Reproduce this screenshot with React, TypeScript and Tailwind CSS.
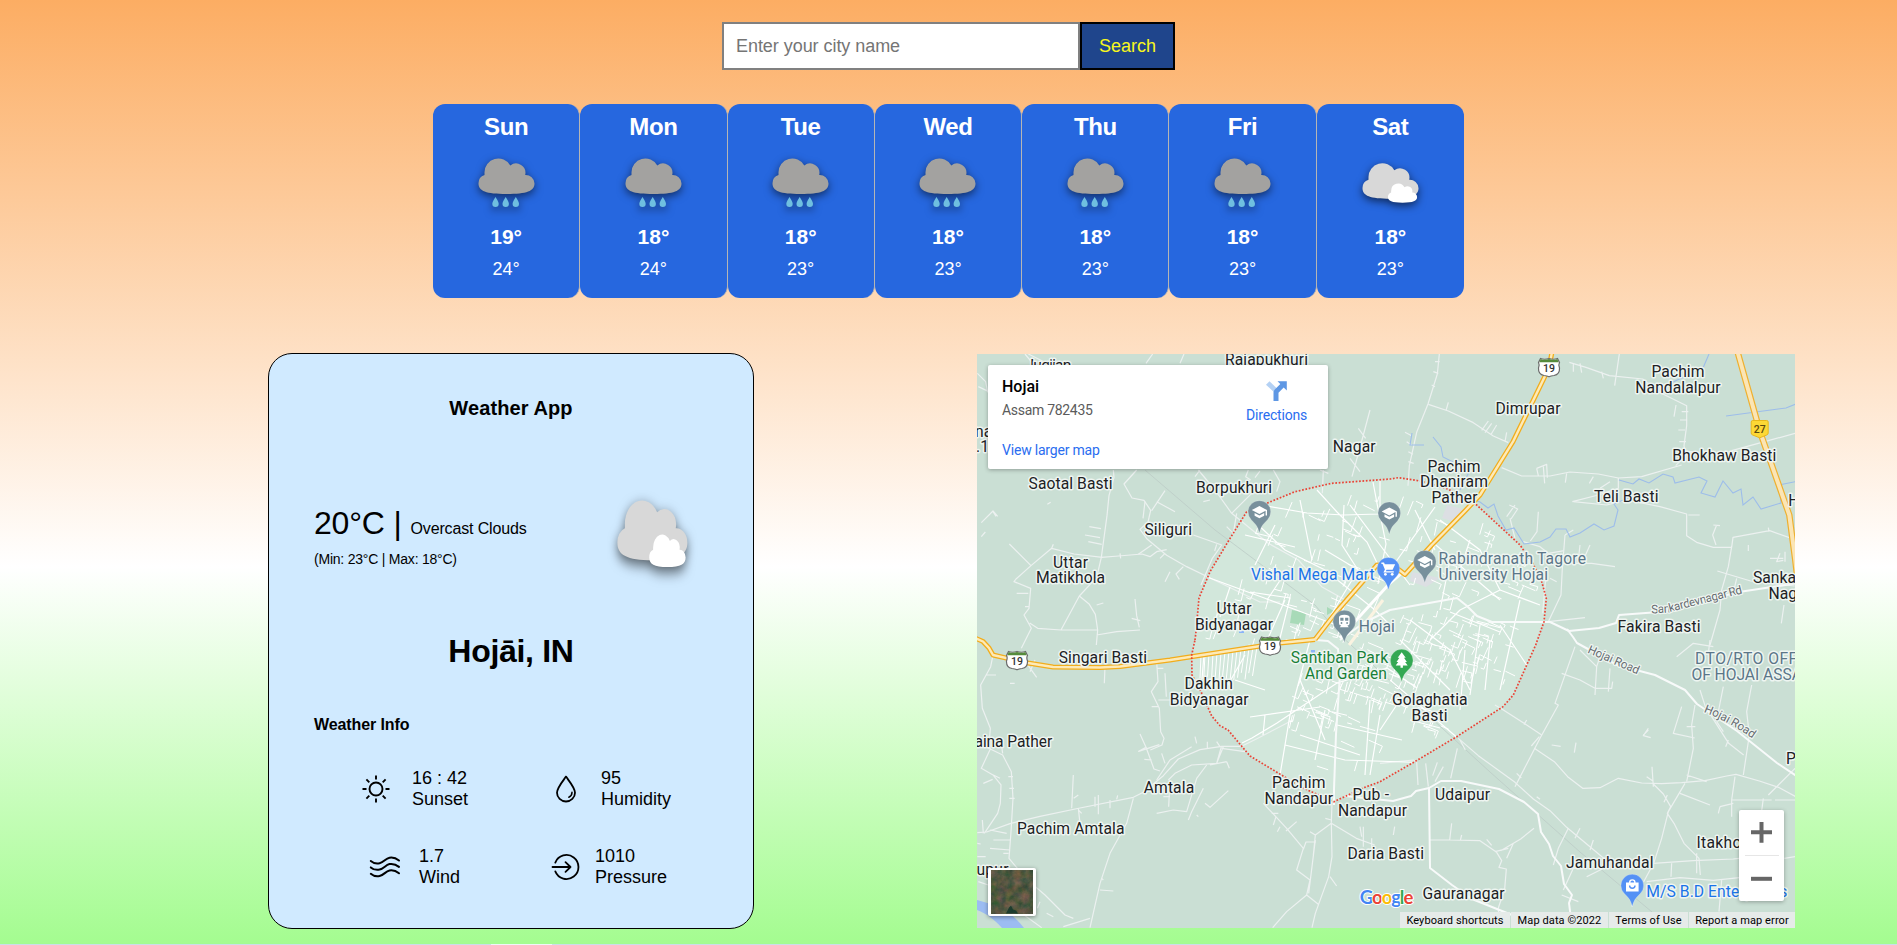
import React from "react";

const arial = "font-['Liberation_Sans',Arial,sans-serif]";
const roboto = "font-['Roboto',sans-serif]";

const CLOUD =
  "M17.5 25V22.5A13.8 13.8 0 0 1 43.3 15.5A9.4 9.4 0 0 1 58.2 25A8.8 8.8 0 0 1 67.5 33.5C67.5 41 60 44 39.5 44C19 44 11.5 41 11.5 33.5A8.8 8.8 0 0 1 17.5 25Z";

function RainIcon() {
  return (
    <svg viewBox="0 0 80 70" className="h-[70px] w-20 overflow-visible">
      <g className="drop-shadow-[0_3px_4px_rgba(0,0,0,0.55)]">
        <path d={CLOUD} fill="#a3a2a0" />
        {[28.5, 38.7, 48.8].map((x) => (
          <path key={x} d={`M${x} 47c1.300 2.600 3.200 4.600 3.200 6.700a3.200 3.200 0 0 1-6.400 0c0-2.100 1.900-4.100 3.200-6.700z`} fill="#6fbfe0" />
        ))}
      </g>
    </svg>
  );
}

function CloudsIcon({ className }: { className: string }) {
  return (
    <svg viewBox="0 0 80 70" preserveAspectRatio="none" className={`overflow-visible ${className}`}>
      <g className="drop-shadow-[0_3px_4px_rgba(0,0,0,0.6)]">
        <path d={CLOUD} transform="translate(0 4.800)" fill="#d8d8d8" />
        <path d={CLOUD} transform="translate(31 29) scale(.52 .54)" fill="#fff" />
      </g>
    </svg>
  );
}

const week = [
  { day: "Sun", min: 19, max: 24, rain: true },
  { day: "Mon", min: 18, max: 24, rain: true },
  { day: "Tue", min: 18, max: 23, rain: true },
  { day: "Wed", min: 18, max: 23, rain: true },
  { day: "Thu", min: 18, max: 23, rain: true },
  { day: "Fri", min: 18, max: 23, rain: true },
  { day: "Sat", min: 18, max: 23, rain: false },
];

function Forecast() {
  return (
    <div className="mx-auto mt-[34px] grid h-[194px] w-[1031px] grid-cols-7">
      {week.map((d, i) => (
        <div
          key={d.day}
          className={`flex flex-col items-center rounded-xl bg-[#2667df] text-white ${i < 6 ? "border-r border-[#b5b5b5]" : ""}`}
        >
          <div className="mt-[9px] h-[28px] text-[24px] leading-[28px] font-bold tracking-[-0.4px]">{d.day}</div>
          <div className="mt-[9px] h-[70px] pl-px">{d.rain ? <RainIcon /> : <CloudsIcon className="h-[70px] w-20" />}</div>
          <div className="mt-[5px] text-[21px] leading-[24px] font-bold">{d.min}°</div>
          <div className="mt-[10px] text-[18px] leading-[21px]">{d.max}°</div>
        </div>
      ))}
    </div>
  );
}

const iconProps = {
  fill: "none",
  stroke: "#000",
  strokeLinecap: "round" as const,
  strokeLinejoin: "round" as const,
};

function SunIcon() {
  return (
    <svg viewBox="0 0 30 30" className="size-[30px]" {...iconProps} strokeWidth="1.9" strokeLinecap="butt">
      <circle cx="15" cy="15" r="6.500" />
      <path d="M15 1.500v4M15 24.500v4M1.500 15h4M24.500 15h4M5.400 5.400l2.900 2.900M21.700 21.700l2.900 2.900M5.400 24.600l2.900-2.900M21.700 8.300l2.900-2.900" />
    </svg>
  );
}

function DropIcon() {
  return (
    <svg viewBox="0 0 30 30" className="size-[30px]" {...iconProps} strokeWidth="1.8">
      <path d="M15 2.600C12.500 6.300 6 13.600 6 18.800a9 8.700 0 0 0 18 0C24 13.600 17.500 6.300 15 2.600z" />
      <path d="M21 18.300c0 2.600-1.300 4.200-3.200 5" strokeWidth="1.500" />
    </svg>
  );
}

function WindIcon() {
  return (
    <svg viewBox="0 0 32 30" className="h-[30px] w-8" {...iconProps} strokeWidth="2">
      {[0, 6.4, 12.8].map((y) => (
        <path key={y} transform={`translate(0 ${y})`} d="M1.800 9c2.500 2.200 5.500 2.800 8.800 2.200C15 10.300 16.500 6.500 20.500 5.700c3.500-.6 6.800.6 9.500 2.800" />
      ))}
    </svg>
  );
}

function PressureIcon() {
  return (
    <svg viewBox="0 0 30 30" className="size-[30px]" {...iconProps} strokeWidth="1.800">
      <path d="M4.300 10.600a12 12 0 1 1 0 8.800" />
      <path d="M1.500 15h18M14.500 10.200l5 4.800-5 4.800" />
    </svg>
  );
}

function Stat({ icon, value, label, gap }: { icon: React.ReactNode; value: string; label: string; gap: string }) {
  return (
    <div className={`flex items-center ${gap}`}>
      {icon}
      <div className="text-[18px] leading-[21px]">
        <div>{value}</div>
        <div>{label}</div>
      </div>
    </div>
  );
}

function WeatherCard() {
  return (
    <section className="flex h-[576px] w-[486px] flex-col rounded-3xl border border-black bg-[#d0eaff] px-[45px] text-black">
      <h1 className="mt-[42px] text-center text-[20px] leading-6 font-bold tracking-[0.1px]">Weather App</h1>
      <div className="mt-[58px] flex h-[118px] justify-between">
        <div className="mt-[27px]">
          <div className="flex items-baseline leading-[37px]">
            <span className="text-[32px] tracking-[-0.2px]">20°C |</span>
            <span className="ml-[9px] text-[16px] tracking-[-0.15px]">Overcast Clouds</span>
          </div>
          <div className="mt-[4px] text-[14px] leading-4 tracking-[-0.22px]">(Min: 23°C | Max: 18°C)</div>
        </div>
        <CloudsIcon className="mr-[5px] h-[118px] w-[100px]" />
      </div>
      <h2 className="mt-[37px] text-center text-[32px] leading-[37px] font-bold tracking-[-0.3px]">Hojāi, IN</h2>
      <h3 className="mt-[46px] text-[16px] leading-[18px] font-bold tracking-[-0.1px]">Weather Info</h3>
      <div className="mt-[34px] grid grid-cols-[190px_1fr] gap-y-9 pl-[47px]">
        <Stat icon={<SunIcon />} value="16 : 42" label="Sunset" gap="gap-[21px]" />
        <Stat icon={<DropIcon />} value="95" label="Humidity" gap="gap-[20px]" />
        <div className="pl-2">
          <Stat icon={<WindIcon />} value="1.7" label="Wind" gap="gap-[18px]" />
        </div>
        <Stat icon={<PressureIcon />} value="1010" label="Pressure" gap="gap-[14px]" />
      </div>
    </section>
  );
}

type Label = [text: string, x: number, y: number, width: number, color?: string];
const SLATE = "#5b7688";
const BLUE = "#1a73e8";
const GREEN = "#188038";

const labels: Label[] = [
  ["Jugijan", 1025.5, 370.5, 46],
  ["Rajapukhuri", 1225, 365, 83],
  ["na", 975, 437, 0],
  [".1", 976, 452, 0],
  ["Nagar", 1332.7, 452, 43],
  ["Saotal Basti", 1028.6, 489.3, 84],
  ["Borpukhuri", 1196, 493.3, 76],
  ["Siliguri", 1144.5, 535, 47.5],
  ["Uttar", 1053, 567.6, 35],
  ["Matikhola", 1036, 583.4, 69],
  ["Vishal Mega Mart", 1251, 579.6, 123.6, BLUE],
  ["Uttar", 1216.5, 614.2, 35],
  ["Bidyanagar", 1195, 630, 78],
  ["Hojai", 1358.8, 632.3, 36, SLATE],
  ["Pachim", 1651.5, 377.3, 53],
  ["Nandalalpur", 1635.3, 393.2, 85.3],
  ["Dimrupar", 1495.5, 414, 65],
  ["Bhokhaw Basti", 1672.3, 461, 104],
  ["Pachim", 1427.5, 471.6, 53],
  ["Dhaniram", 1420, 487.3, 68],
  ["Pather", 1431.5, 503, 46],
  ["Teli Basti", 1594, 502.2, 64.5],
  ["H", 1788.3, 506.4, 0],
  ["Rabindranath Tagore", 1438.5, 564.4, 147.5, SLATE],
  ["University Hojai", 1438.5, 580.2, 109.5, SLATE],
  ["Sankar", 1753, 583, 0],
  ["Nagar", 1768.5, 599.2, 0],
  ["Fakira Basti", 1617.5, 632.2, 83],
  ["Singari Basti", 1058.7, 663, 88.5],
  ["Dakhin", 1184.5, 689.2, 48.5],
  ["Bidyanagar", 1169.7, 705.4, 79],
  ["aina Pather", 974.5, 746.5, 77.8],
  ["Amtala", 1143.7, 793.2, 50.5],
  ["Pachim", 1272, 788.2, 53.5],
  ["Nandapur", 1264.5, 804.2, 68.5],
  ["Pachim Amtala", 1017, 834.4, 107.5],
  ["upur", 976.5, 875, 32],
  ["Santiban Park", 1290.7, 663.3, 97.5, GREEN],
  ["And Garden", 1305, 679.2, 82, GREEN],
  ["Pub -", 1352.5, 800.4, 36.5],
  ["Nandapur", 1338, 816.4, 69],
  ["Daria Basti", 1347.5, 858.6, 76.5],
  ["Golaghatia", 1392, 704.9, 75.5],
  ["Basti", 1411.5, 720.6, 36],
  ["DTO/RTO OFFICE", 1695, 664.3, 127, SLATE],
  ["OF HOJAI ASSAM", 1691.5, 680.2, 124, SLATE],
  ["Udaipur", 1435, 799.6, 55],
  ["Gauranagar", 1422.6, 898.6, 82],
  ["Jamuhandal", 1566, 867.5, 87.5],
  ["Itakhola", 1696.4, 848.2, 58],
  ["P", 1786, 764.2, 0],
  ["M/S B.D Enterprises", 1646.3, 896.6, 141, BLUE],
];

const HALO = { stroke: "#eef5f1", strokeWidth: 3, strokeLinejoin: "round" as const, paintOrder: "stroke" as const };

const TOWN =
  "M1195 640L1196 631.700 1199 598 1210 571.700 1228 541.700 1246.700 511.700 1266.700 503.300 1295 491.700 1331.700 483.300 1390 479 1398.300 477.700 1420 481 1448 489 1476.700 505 1520 545 1532.700 563.300 1541.700 581.700 1546.300 598.300 1544 621.700 1535.700 645 1513.300 695 1503 706.700 1456.700 736.700 1413 762.700 1380 781.700 1363 788 1334 801.700 1303 788 1250 756 1228 730 1220 725.700 1211.700 716 1201 691.700 1192 675 1191.700 655Z";

const highway19 = [
  "M1552 352L1549 368 1513 441.700 1480 495 1465 511 1431.700 545 1405 574.500 1396 567.500 1377 565 1338 610 1330 620 1315 639.500",
  "M1315 639.500L1280 643 1170 660 1120 666.500 1100 667.500 1053 667 1028 663 993 655 989 648 983 641.500 975 638",
];
const highway27 = "M1737 350L1760 431.700 1789.300 515 1795 558 1797 575";

const tileNW = [
  "M165 27l50 60 70 40M175 27l120 60M548 27l-20 28M642 27l-12 28M22 85l25 25 6 32M25 125l30 14M1200 195l-32 120-22 80M1165 250l22 30M1150 300l25 22M1140 340l30 40M1075 385l-25-10M1060 375l-3 70",
  "M430 375l2 22-15 55-6 60-17 125 52-4 70-6 24 8 20-15 30-6",
  "M500 375l-38 42 24 42 36 7 20 30-8 35-24 22 22 30 58 48 60 34 70 34 150 72 60 0M545 497l40-60M560 470l55 30M570 640l15-15M670 570l85 30-28 40-34 80M740 598l-6 20M600 680l-15 30M640 665l-22 22 10 16",
  "M685 375l50 60 50 70 110 90 90 50 70 80 80 45M700 470l20-5M785 505l60-60 60-30M770 545l20 20 10-60",
  "M118 597l65 65 62-52 67 17 85 10M245 610l5-12M183 662l-45 40-6 8 50 20-5 60-15 20 22 40-30 60M140 745h35M165 785h14M394 637l-14 60-52 56-55 102-70-5-24-16M328 753l30 25 18 30 7 47-110 0M383 855l-4 45M380 780l20-6M495 762l5 50 8 35M485 820l26 7M358 545l35 6M345 570l45 8M355 590l40 8M380 870l60-10 70-5",
  "M34 533l35-35 14 16M68 498l10 16M34 575l12-14M232 478l10-6M450 625l2 15M545 600l-40 28",
  "M525 470l-6 50M690 375l-15 20M835 375l-8 20 15 10M870 378l-15 20M910 375l20 35-10 30",
];
const tileNE = [
  "M178 27l-6 60-28 90-34 85-22 100-4 60M165 50h14M160 80l15 5M155 120l10 5M75 262l20 10M80 290l15 10M85 320l14 8M85 350l16 5",
  "M145 178l60 20 75 35 60 40 45 20M205 172l-7 25M325 228l-20 28M335 235l-20 28M350 240l-18 30M380 262l-5 28",
  "M365 368l60 25 85 0 60-12 85 6 60 12 70-4 120-35M470 370l30-12 2 40M470 370l5 22M490 365l4 50M560 385l-4 28M640 395l-12 20M715 400l0 30-60 20-78 20M660 430l30-20",
  "M568 52l50 15 70 25 100 10 50 40 82 40 0 60-8 60 5 30-30 30M718 27l-14 95M580 55v25M600 55l5 28M665 80l5 20M888 180l-6 35M905 200h20M900 225h22M895 255h20M898 290h20M912 320h40",
  "M1245 265l-80 22-110 30",
  "M580 470l100 10 60-15 100 20 80 22 0 65 30 20 50 15 55 0 4-30 110-20 80 28M925 510h34M1055 605l-10 60-20 70-5 60-30 105M1012 678l100 30 132 15M1010 540l-12 30 10 30M1000 540l20 2M1165 548l2 12M1105 600v18M1170 640h40M1200 625l-10 25 20-4M1215 620v30M1070 700l-8 35M1212 780l-8 55",
  "M388 480l25 12-20 30M380 515l25-35M390 520l15 60M475 500l-4 60-20 28M430 590l50 15 25 20 48-8M555 570l-8 100-4 80-38 80M555 570l25-15M600 600l-5 45M630 600l-20 45M545 655l90 0 70 10M505 830l110-12M500 665l-12 140M510 700l20 10",
];
const tileSW = [
  "M70 40l-8 40-30 55 5 70 24 60-5 60 42 20 26 50 5 80-6 100-6 80 50 60 58 50 60 60 25 10M98 340l-3-20M48 105h30M120 130h14M62 325l-28 60 35 20 24 30-2 55-8 30-40 60M40 430l28-12M70 405l20 10M22 578l28-2 70-25 90-22 120-25 160-32 30-15 60-50 45-50 65-28 65-10 60 0 50-25 105-55",
  "M22 650h25M22 610l10 2M25 725l30 10M60 570l50 10M40 580l-3-40M60 625l60 5M70 600h50M118 445h14M118 475h16M115 410h14M100 640h16",
  "M490 475l-20 75-50 90-30 90-30 133M390 750l40 3M400 720l-4-4M310 405l-5 100M325 465l-14 10M325 505l5 45M375 470v30M385 465v58M420 480v25M440 478l3-12M335 520l-10-10",
  "M510 282l18 40-22 12 62-20M528 322l24 65 18 6M545 360l-22-2M560 420l40-60 65-40M575 340l10 30M560 65l4 60-20 30 24 50 4 70 10 20-6 20-35 15M580 85h-20M565 180h40M545 200h20M585 100l4 70M405 80l-2 50M170 70l30 42M195 60l-15 35",
  "M595 420l20-20 50-25 75-5 14-50M770 365l-50 10M600 420l-4 80M560 520l50-10 40 5 30-100 30-40M655 540l10-25 35-70M680 525l5 5M705 490l15 12 55-50M580 470l20 0M755 325l70 10M740 370l20-50M770 365l8 20M675 290l5 20M712 305v20M740 305l10 15",
  "M880 490l70 75 50 60-20 65 40 30-10 45-60 50-42 48M980 545l-32 28M1000 628l8-22h30M1084 550l-48 35-6 60M1036 600l-10 80-10 80M1084 550l2 100-10 60-40 110-10 43M1084 548l2-60M1084 550l75 45 55 20M1080 710l20 28M1066 535l18 5M1170 560l5 30M1180 560v60M1205 595v30M1020 575l16 10M1010 765l35 28M905 520l20 0M918 530l-8 25M930 560l-8 15",
  "M155 820l60 43M210 785l-8 20M230 820l20 10M280 860l80-25",
];
const tileSE = [
  "M585 20l-60 170 10 5-55 100-75 145M545 100l55 20 45 25 50 0 3-20M600 30l50 50-5 85M690 85l-5 70M650 80l10-30",
  "M235 295l60 52 110 80 55 50 50 35 50 50 120 100M370 210l70 45 45 30M345 195l25 15M463 325l60 40 40 45 45 35 52-2 55-28 70 14 60 2 60-3 70-6 65-14 28-5 70 20 60 20 110 60M440 240l-8 14M515 315l27 4M588 308l-5 30M478 290l-24 28M410 400l14 14M470 470l10 8",
  "M820 432l30 30 22 38-10 20 20 30 30 60 45 45 4 50M915 430l-50 85-20 80-24 75-30 55M900 460l90 35M862 465l-10 22M820 440l-4-60M800 410l20 14M805 265l-15 22 22 6M790 285l15-15",
  "M945 195l-10 60 5 70-20 100M905 200l-25 80 64 14M920 260h26M1030 140l-20 100M1115 135l-15 80 8 70-18 120M960 150l16 50 70 110 45 35M1010 245l20 30M1045 300l-8 20M920 405l60 20",
  "M145 440l-8-70M110 365l-10-5-100 10M165 425l25-45M212 415l20-90M172 367l-14 40M240 300l16 30M110 365l4 70",
  "M150 600l60 0 90 2 50 35 15 25-8 20 22 5-5 60-20 60 10 50M215 550l-6 50M245 585l-4 16M320 598l15 18M462 565l-40 32-60 35M400 610l-20 45M345 635l40-10M44 560l-4 25",
  "M565 565l-30 60-15 50M600 565l-15 30M640 600l-10 30M545 765l50 20M550 750l30-65 60-10M620 710l60-30",
  "M820 670l120-8 120-5 18-2M800 725l100-12 100 8 78-8M875 670l-2 40M950 640v60M1025 720l-8 95M1065 410l-10 70 0 50M1150 475l-8 60M1165 465l80-80M1020 500l40-10M1020 500l-5 20M1245 650l-32 5M1055 480h120M1245 480l-60 0",
  "M990 0l-5 40M890 50l50-40 60 10M770 725l-14 75",
];
const townRoads = [
  "M1267 506l40 7 37 2 35-1M1344 505l-2 40 16 25M1317 490l20 22 30 30 12 25M1373 482l6 32M1255 522l30 28 40 20 50 40 15 15M1245 535l50 12M1275 525l-20 40M1300 500l12 60M1380 480l0 34 6 30-8 40M1415 510l20 40M1435 507l-50 70M1350 505l60 80M1325 550l50 30",
  "M1207 577l60 22 80 30M1230 587l-10 30M1250 592l40 6-10 40M1285 600l-20 45M1267 600l20-30M1325 625l30-50M1440 520l40 30 20 40-40 20M1430 540l70 60M1450 560l-10 50M1470 540l-10 30",
  "M1450 612l50 20M1410 620l40 30 20 40M1480 625l-10 70M1520 600l-20 90M1540 605l-40-15M1400 640l50 50M1430 640l30-30M1500 625l40 60",
  "M1337 683l-60 40-25 15-10 5M1310 640l-20 75-10 60-2 15M1285 745l60 15 90 3M1325 710l-10 50M1370 700l-5 75M1380 715l-10 60M1337 683l50-15 30 20M1265 715l-2 20M1250 717l70-10M1390 680l70 60M1400 700l-20 30M1410 720l30 8M1337 725l65 15",
  "M1204 654l-2 25M1220 600l-6 30M1235 680l30 10M1225 690l20-35M1300 680l25 60M1300 735l60 20M1465 650l-5 60M1490 640l-5 50",
];
const majorRoads = [
  "M1316 640l12 1 10 8 2 25-4 60-2 55 0 16",
  "M1340 640l25-18 25-12 67-12 10 8 10 10 15 6h58l19 9 30-3 17-5 3-8 40-3 80-20 100-15",
  "M1567 629l6 8 4 6 40 22 38 10 30 15 12 14 40 27 40 32 30 20",
  "M1345 796l48 5 18-5 5-5 13-3 12-7h20l38 8 25 13 14 12 3 18 8 12 4 12 8 10 3 18 8 11-3 8 2 16 16 14",
  "M1429 788l1 80 22 17 20 14 40 16",
];
const rivers = [
  "M1412 433l-2 12h14M1433 437l8 10 2 10 10 5M1462 497l18 5 8 6 6-4 4 12 8 14 8-2 10 16 16-2 10-5 6-8 10 0 4 8 10-4 14-9 10 6 10-4 4-16-4-6 14-6M1470 470l-10 20",
  "M1619 480l14 4 6-5 10 4 14-9 10 3 2 6 24-6 8 4-6 12 14 4 8-16 10 12 8-4 2 16 10-8 8 12 20-6-2-18 20-4 16-1 10-6 20 4",
  "M1709 354l-6 14-30 14M1726 416l60-8 10-4",
];

function sideLanes() {
  let seed = 11;
  const rnd = () => {
    seed = (seed * 16807) % 2147483647;
    return seed / 2147483647;
  };
  const zones: [number, number, number, number, number][] = [
    [1255, 495, 190, 85, 60],
    [1270, 585, 110, 50, 28],
    [1400, 610, 110, 70, 80],
    [1350, 640, 70, 60, 50],
    [1290, 670, 70, 60, 34],
    [1290, 720, 80, 50, 8],
    [1210, 560, 60, 80, 10],
    [1440, 520, 90, 80, 22],
    [1380, 690, 80, 50, 14],
  ];
  let d = "";
  for (const [x, y, w, h, n] of zones) {
    for (let i = 0; i < n; i++) {
      const px = x + rnd() * w;
      const py = y + rnd() * h;
      const a = (rnd() < 0.5 ? 0.35 : 1.9) + (rnd() - 0.5) * 0.25;
      const l = 5 + rnd() * 12;
      const dx = Math.cos(a) * l;
      const dy = Math.sin(a) * l;
      d += `M${px.toFixed(1)} ${py.toFixed(1)}l${dx.toFixed(1)} ${dy.toFixed(1)}`;
      if (rnd() < 0.4) d += `l${(-dy * 0.5).toFixed(1)} ${(dx * 0.5).toFixed(1)}`;
    }
  }
  for (let i = 0; i < 15; i++) {
    d += `M${1201 + i * 4} ${655 - i * 0.6}l${-1 - i * 0.25} ${22 + rnd() * 10}`;
  }
  return d;
}
const lanes = sideLanes();

function Tile({ x, y, paths }: { x: number; y: number; paths: string[] }) {
  return (
    <g transform={`translate(${x} ${y}) scale(.33333)`} fill="none" stroke="#ecf1f0" strokeWidth="3.600" strokeLinejoin="round">
      {paths.map((d) => (
        <path key={d} d={d} />
      ))}
    </g>
  );
}

function Shield19({ x, y }: { x: number; y: number }) {
  return (
    <g transform={`translate(${x} ${y})`}>
      <path d="M-8.500-9c3 1.200 5.500 1 8.500 0 3 1 5.500 1.200 8.500 0l2 4c-1.200 2-.6 4 0 5.500.3 5-3 7-5.500 7.500C3 8.200 1.500 8.500 0 9.300-1.500 8.500-3 8.200-5 8c-2.500-.5-5.800-2.500-5.500-7.500.6-1.500 1.200-3.500 0-5.500z" fill="#fff" stroke="#6b6b6b" strokeWidth="1.200" />
      <path d="M-8.300-8.500c3 1.200 5.400 1 8.300 0 3 1 5.400 1.200 8.300 0l1.300 3.300H-9.600z" fill="#558b3c" />
      <text y="4.300" textAnchor="middle" fontSize="10.500" fontWeight="500" fill="#333">19</text>
    </g>
  );
}

function Pin({ x, y, color, children }: { x: number; y: number; color: string; children: React.ReactNode }) {
  return (
    <g transform={`translate(${x} ${y})`}>
      <path d="M0 21.300C-1.800 13.500-5 11.500-8.200 8A11.300 11.300 0 1 1 8.200 8C5 11.500 1.800 13.500 0 21.300z" fill={color} stroke="#fff" strokeOpacity=".35" strokeWidth=".6" />
      <g fill="#fff">{children}</g>
    </g>
  );
}

const Cap = () => (
  <path d="M0-5.600L-7.600-1.600 0 2.400l6.200-3.300v4.600h1.400v-5.300zM-4.800 1.200v2.900L0 6.600l4.800-2.500V1.200L0 3.800z" />
);

function MapCanvas() {
  return (
    <svg viewBox="977 354 818 574" className={`block h-[574px] w-[818px] ${roboto}`}>
      <defs>
        <clipPath id="town">
          <path d={TOWN} />
        </clipPath>
        <path id="rd-sankar" d="M1651.500 613.500L1668 612.500Q1700 604 1748 592" />
        <path id="rd-hojai-a" d="M1587 652.500L1640 675.500" />
        <path id="rd-hojai-b" d="M1703.500 712Q1732 723 1757 742" />
      </defs>
      <rect x="977" y="354" width="818" height="574" fill="#cadfd4" />
      <path d={TOWN} fill="#d2e7db" />
      <path d="M977 900c20 5 35 12 47 28h-22c-8-9-15-14-25-18z" fill="#9cbcf2" />
      <path d="M1292 610l14 3-2 12-14-2zM1327 607l7 4-7 4z" fill="#a8dab8" />
      <path d="M1447 505l16 4-8 13-13-4zM1412 572l28 6-14 9-16-6z" fill="#dcdfe3" />
      <path d="M1311 650h4v3h-4zM1239 631h5v2h-5z" fill="#8ab4f8" />
      <path d="M1145 470l70 60 100 75 25 30 90 82 60 55 90 80 90 75" fill="none" stroke="#bccbc6" strokeWidth=".8" />
      <Tile x={970} y={345} paths={tileNW} />
      <Tile x={1380} y={345} paths={tileNE} />
      <Tile x={970} y={640} paths={tileSW} />
      <Tile x={1380} y={640} paths={tileSE} />
      <g fill="none" stroke="#9dbdea" strokeWidth="1.100">
        {rivers.map((d) => (
          <path key={d} d={d} />
        ))}
      </g>
      <g fill="none" stroke="#fff" clipPath="url(#town)">
        {townRoads.map((d) => (
          <path key={d} d={d} strokeWidth="1.200" />
        ))}
        <path d={lanes} strokeWidth="1" />
        <path d="M1349 645l34-45" stroke="#faf3e1" strokeWidth="3" />
      </g>
      <g fill="none" stroke="#f8fafa" strokeWidth="2" strokeLinejoin="round">
        {majorRoads.map((d) => (
          <path key={d} d={d} />
        ))}
      </g>
      <path d="M1340 638l50-55 14-12" stroke="#fff" strokeWidth="3" fill="none" />
      <g fill="none" strokeLinejoin="round">
        {highway19.map((d) => (
          <path key={d} d={d} stroke="#f2ad1c" strokeWidth="5" />
        ))}
        <path d={highway27} stroke="#efb02f" strokeWidth="6.400" />
        {highway19.map((d) => (
          <path key={d} d={d} stroke="#fdeab8" strokeWidth="2.400" />
        ))}
        <path d={highway27} stroke="#fbe5b5" strokeWidth="4" />
      </g>
      <path d={TOWN} fill="none" stroke="#ea4335" strokeWidth="1.700" strokeDasharray="1.700 1.700" />

      <Shield19 x={1549} y={367.500} />
      <Shield19 x={1017} y={660.500} />
      <Shield19 x={1270} y={646} />
      <g transform="translate(1759.700 429)">
        <path d="M-7-8.500H7Q8.500-8.500 8.500-7V4Q8.500 5.500 7 6L0 8.800-7 6Q-8.500 5.500-8.500 4V-7Q-8.500-8.500-7-8.500z" fill="#fdd835" stroke="#e8b81c" strokeWidth="1" />
        <text y="3.500" textAnchor="middle" fontSize="10.500" fontWeight="500" fill="#5b4a10">27</text>
      </g>

      {labels.map(([text, x, y, w, color]) => (
        <text key={text + x} x={x} y={y} fontSize="15.700" fill={color ?? "#202124"} textLength={w || undefined} {...HALO}>
          {text}
        </text>
      ))}
      <g fontSize="11.800" fill="#666b70" {...HALO} strokeWidth={2.500}>
        <text><textPath href="#rd-sankar" textLength="94">Sankardevnagar Rd</textPath></text>
        <text><textPath href="#rd-hojai-a" textLength="55">Hojai Road</textPath></text>
        <text><textPath href="#rd-hojai-b" textLength="56">Hojai Road</textPath></text>
      </g>

      <Pin x={1259.400} y={511.700} color="#78909c"><Cap /></Pin>
      <Pin x={1389.300} y={513} color="#78909c"><Cap /></Pin>
      <Pin x={1424.800} y={561.500} color="#78909c"><Cap /></Pin>
      <Pin x={1388.400} y={568.500} color="#5491f5">
        <path d="M-7-6h2.600l.8 1.700H6.800L4.200 1.300h-6l-.8 1.400H5.400v1.400H-5l1.500-3L-5.800-4.600H-7z" />
        <circle cx="-3" cy="5.800" r="1.400" />
        <circle cx="3.800" cy="5.800" r="1.400" />
      </Pin>
      <Pin x={1344.300} y={621.300} color="#78909c">
        <path fillRule="evenodd" d="M-5.300-4q0-2.500 5.300-2.500t5.300 2.500v6q0 2.200-2.200 2.300l1.400 1.600h-9l1.400-1.600q-2.200-.1-2.200-2.300zM-4-3.600v3h3.200v-3zM.8-3.600v3H4v-3zM-3.700 1.700a.9.9 0 1 0 1.800 0 .9.9 0 0 0-1.800 0zM1.900 1.700a.9.9 0 1 0 1.800 0 .9.9 0 0 0-1.800 0z" />
      </Pin>
      <Pin x={1401.700} y={660.300} color="#34a853">
        <path d="M0-8l4 5.400H2.300L5.200 1.600H3.400L6 5.200H1.200V7.500h-2.400V5.200H-6l2.600-3.600h-1.800l2.900-4.200H-4z" />
      </Pin>
      <Pin x={1632.300} y={885.300} color="#5491f5">
        <path fillRule="evenodd" d="M-6.300-2.800h3A3.300 3.300 0 0 1 3.300-2.800h3v9h-12.600zM-1.900-2.800h3.800a1.900 1.900 0 0 0-3.800 0zM-3.400.2a3.400 3.400 0 0 0 6.800 0H2a2 2 0 0 1-4 0z" />
      </Pin>

      <text x="1359.800" y="904.300" fontSize="18.500" textLength="53.500" className="font-['Lato',sans-serif] font-bold" stroke="#fff" strokeWidth="2" paintOrder="stroke">
        <tspan fill="#4285f4">G</tspan>
        <tspan fill="#ea4335">o</tspan>
        <tspan fill="#fbbc05">o</tspan>
        <tspan fill="#4285f4">g</tspan>
        <tspan fill="#34a853">l</tspan>
        <tspan fill="#ea4335">e</tspan>
      </text>
    </svg>
  );
}

function SatelliteThumb() {
  return (
    <svg viewBox="0 0 42 43" className="size-full">
      <defs>
        <filter id="terrain" x="0" y="0" width="100%" height="100%" colorInterpolationFilters="sRGB">
          <feTurbulence type="fractalNoise" baseFrequency=".13" numOctaves="4" seed="4" />
          <feColorMatrix values=".4 0 0 0 .13  .12 .12 0 0 .22  .1 0 .12 0 .14  0 0 0 0 1" />
        </filter>
      </defs>
      <rect width="42" height="43" filter="url(#terrain)" />
      <path d="M15 43l3-6 2-2 2 4 3 1 2 3z" fill="#14372b" opacity=".85" />
    </svg>
  );
}

function MapPanel() {
  return (
    <section className={`relative mt-px h-[574px] w-[818px] overflow-hidden ${roboto}`}>
      <MapCanvas />
      <div className="absolute top-[11px] left-[11px] flex h-[104px] w-[340px] justify-between rounded-xs bg-white pr-[21px] pl-[14px] shadow-[0_1px_4px_rgba(0,0,0,0.3)]">
        <div className="text-[14px]">
          <div className="mt-[12px] text-[16px] leading-5 font-medium text-black">Hojai</div>
          <div className="mt-[4px] leading-[18px] tracking-[-0.3px] text-[#5b5b5b]">Assam 782435</div>
          <div className="mt-[22px] leading-[18px] tracking-[-0.2px] text-[#2a6df0]">View larger map</div>
        </div>
        <div className="flex flex-col items-center text-[14px] text-[#2a6df0]">
          <svg viewBox="0 0 21 20" className="mt-4 h-5 w-[21px]">
            <path d="M0 3.700L3.500.2 12 8.500 9 12z" fill="#b4d1f4" />
            <path d="M11.500.2H20.800V9.500L17.700 6.600 12.500 11.800V20H7.500V11.500Q7.500 9.800 8.800 8.500L14.300 3z" fill="#5e97e4" />
          </svg>
          <div className="mt-[5px] leading-[18px] tracking-[-0.2px]">Directions</div>
        </div>
      </div>
      <div className="absolute bottom-[12px] left-[11px] size-12 rounded-xs bg-white p-[3px] pt-[2px] pb-[2px] shadow-[0_1px_4px_rgba(0,0,0,0.4)]">
        <SatelliteThumb />
      </div>
      <div className="absolute right-[11px] bottom-[27px] flex h-[91px] w-[45px] flex-col items-center rounded-xs bg-white shadow-[0_1px_4px_rgba(0,0,0,0.3)]">
        <svg viewBox="0 0 45 45" className="size-[45px]"><path d="M12 20.300h8.500V12h4v8.300H33v4h-8.500v8.500h-4v-8.500H12z" fill="#666" /></svg>
        <div className="h-px w-[34px] bg-[#e6e6e6]" />
        <svg viewBox="0 0 45 45" className="size-[45px]"><path d="M12 20.800h21v4H12z" fill="#666" /></svg>
      </div>
      <div className="absolute right-0 bottom-0 flex h-4 gap-px text-[11px] leading-[17px] text-black [&>div]:bg-[#e6ebe9] [&>div]:text-center">
        <div className="w-[110px] tracking-[0.1px]">Keyboard shortcuts</div>
        <div className="w-[97px] tracking-[0.1px]">Map data ©2022</div>
        <div className="w-[79px] tracking-[0.1px]">Terms of Use</div>
        <div className="w-[106px] tracking-[0.1px]">Report a map error</div>
      </div>
    </section>
  );
}

export default function App() {
  return (
    <div className={`h-[945px] w-full overflow-hidden ${arial}`}>
      <div className="h-[944px] bg-[linear-gradient(180deg,#fcad63_0px,#ffffff_567px,#a4fc90_944px)] pt-[22px]">
        <form className="flex h-12 justify-center" onSubmit={(e) => e.preventDefault()}>
          <input
            placeholder="Enter your city name"
            className="w-[358px] border-2 border-[#808080] bg-white pl-3 text-[18px] tracking-[-0.05px] outline-none placeholder:text-[#757575]"
          />
          <button className="w-[95px] border-2 border-black bg-[#1f458c] text-[18px] text-[#f7f71c]">Search</button>
        </form>
        <Forecast />
        <main className="mt-[55px] flex pl-[268px]">
          <WeatherCard />
          <div className="ml-[223px]">
            <MapPanel />
          </div>
        </main>
      </div>
      <div className="flex h-px bg-[#c9dfe9] pl-[491px]">
        <div className="w-[61px] bg-[#eef6f8]" />
      </div>
    </div>
  );
}
